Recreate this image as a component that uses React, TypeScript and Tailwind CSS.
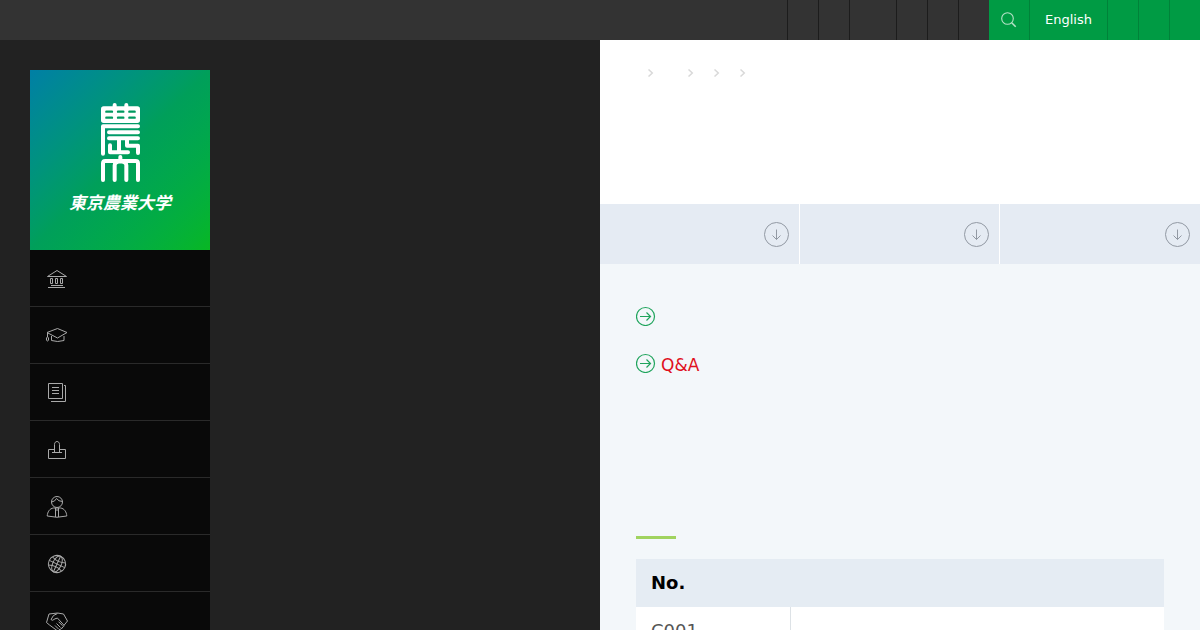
import React from "react";

type IconProps = { children: React.ReactNode };

function NavIcon({ children }: IconProps) {
  return (
    <svg
      viewBox="0 0 24 24"
      className="h-6 w-6 shrink-0"
      fill="none"
      stroke="#a9a9a9"
      strokeWidth="1"
      aria-hidden="true"
    >
      {children}
    </svg>
  );
}

const navItems: { label: string; href: string; icon: React.ReactNode }[] = [
  {
    label: "University",
    href: "#university",
    icon: (
      <>
        <path d="M12 4.5 2.5 10.5h19z" />
        <path d="M5.5 12.5h2v5h-2zM10.5 12.5h2v5h-2zM15.5 12.5h2v5h-2zM6 19.5h12M3 21.5h17" />
      </>
    ),
  },
  {
    label: "Faculties",
    href: "#faculties",
    icon: (
      <>
        <path d="M12.5 5.5 2 9.5l10.5 5.5 9.5-5.5z" />
        <path d="M6.5 13v4.5q6 2 12.5 0V13M2.5 9.5V14" />
        <ellipse cx="2.5" cy="16" rx="1.1" ry="2" />
      </>
    ),
  },
  {
    label: "Research",
    href: "#research",
    icon: (
      <>
        <path d="M3.5 3.5h14v15h-14zM7 7.5h7M7 10.5h7M7 13.5h7" />
        <path d="M19 5.5h1.5v16H6" />
      </>
    ),
  },
  {
    label: "Admissions",
    href: "#admissions",
    icon: (
      <>
        <path d="M9.5 12.5h-6v9h17v-9h-6" />
        <path d="M9.5 15.5v-8c0-4 5-4 5 0v8M7 15.5h10" />
      </>
    ),
  },
  {
    label: "Careers",
    href: "#careers",
    icon: (
      <>
        <circle cx="12" cy="8" r="5.5" />
        <path d="M6.5 8q3.5-.3 5-3.5 2 3 6 3" />
        <path d="M8.5 14c-4 .5-6 4-6.300 8q9.800 2.500 19.600 0c-.3-4-2.300-7.500-6.300-8z" />
        <path d="M10.5 14v9M13.500 14v9M11 16h2" />
      </>
    ),
  },
  {
    label: "International",
    href: "#international",
    icon: (
      <g transform="rotate(25 12 13)">
        <circle cx="12" cy="13" r="8.600" />
        <ellipse cx="12" cy="13" rx="4.300" ry="8.600" />
        <path d="M12 4.500v17M3.500 13h17M5 8.500q7 3 14 0M5 17.500q7-3 14 0" />
      </g>
    ),
  },
  {
    label: "Partnerships",
    href: "#partnerships",
    icon: (
      <g transform="translate(0 1)">
        <path d="M4 5 1.500 13.500l3 2.500L12 21.500q1.500.5 2-.8 1.700.2 2-1.200 1.700 0 1.700-1.500 1.500-.3 1.300-1.700L22.500 12l-4-7-6-1-8.500 1" />
        <path d="m12.500 4.500-4 2-2.500 4q1.200 2 4-.7l2.500-.7L19 16.300M11.500 14.500l4 4M13.500 12.700l4 4M10 16.500l3.500 3.500" />
      </g>
    ),
  },
];

function SealMark() {
  return (
    <svg viewBox="0 0 117 237" className="h-[79px] w-[39px]" aria-hidden="true">
      <g
        fill="none"
        stroke="#fff"
        strokeWidth="12"
        strokeLinecap="round"
        strokeLinejoin="round"
      >
        <path d="M41 6v14M76 6v14" />
        <rect x="6" y="16" width="105" height="38" rx="2" fill="#fff" />
        <path
          d="M16 26h17M51 26h16M85 26h16M16 44h17M51 44h16M85 44h16"
          stroke="#00995f"
          strokeWidth="7"
        />
        <path d="M6 152V70h105M24 88h87M24 106h87" />
        <path d="M27 127v21h27v-38M54 148h27M78 110v18h33v22" />
        <path d="M6 231v-50q0-7 7-7h91q7 0 7 7v50M58 162v12M41 231v-44q0-10 17-12 18 2 18 12v44" />
      </g>
    </svg>
  );
}

function CircleArrowDown() {
  return (
    <svg viewBox="0 0 26 26" className="h-[26px] w-[26px]" fill="none" stroke="#9299a3" aria-hidden="true">
      <circle cx="13.5" cy="13.5" r="12" />
      <path d="M13.5 8.5v10M9.5 14.5l4 4 4-4" />
    </svg>
  );
}

function CircleArrowRight() {
  return (
    <svg viewBox="0 0 20 20" className="h-5 w-5 shrink-0" fill="none" stroke="#1fa45c" strokeWidth="1.2" aria-hidden="true">
      <circle cx="9.5" cy="10.5" r="9" />
      <path d="M4 10.5h10.500M10.500 6.500l4 4-4 4" />
    </svg>
  );
}

function Chevron() {
  return (
    <svg viewBox="0 0 6 8" className="h-2 w-1.5" fill="none" stroke="#d9d9d9" strokeWidth="1.5" aria-hidden="true">
      <path d="m.5.5 3.800 3.500L.5 7.500" />
    </svg>
  );
}

function TopBar() {
  return (
    <header className="flex h-10 shrink-0 justify-end bg-[#333]">
      <nav className="flex" aria-label="Audience">
        {["a", "b"].map((k) => (
          <span key={k} className="w-[31px] border-l border-[#1c1c1c]" />
        ))}
        <span className="w-[47px] border-l border-[#1c1c1c]" />
        {["c", "d", "e"].map((k) => (
          <span key={k} className="w-[31px] border-l border-[#1c1c1c]" />
        ))}
      </nav>
      <div className="flex bg-[#009b44]">
        <button type="button" aria-label="Search" className="flex w-10 items-center justify-center">
          <svg viewBox="0 0 16 16" className="h-4 w-4" fill="none" stroke="#b5e2c7" strokeWidth="1.1">
            <circle cx="6.5" cy="6.5" r="5.800" />
            <path d="m10.700 10.700 4 4" strokeWidth="1.6" />
          </svg>
        </button>
        <a
          href="#english"
          className="flex items-center border-x border-[#008239] px-[15px] text-[13px] leading-5 text-white"
        >
          English
        </a>
        <span className="w-[31px] border-r border-[#008239]" />
        <span className="w-[31px] border-r border-[#008239]" />
        <span className="w-[30px]" />
      </div>
    </header>
  );
}

function Sidebar() {
  return (
    <aside className="w-[180px]">
      <a
        href="#home"
        className="flex h-[180px] flex-col items-center bg-linear-to-br from-[#007fa5] via-[#009f5a] to-[#08b722] pt-[33px]"
      >
        <SealMark />
        <span className="mt-2 text-[17px] leading-6 font-bold whitespace-nowrap text-white italic [font-family:'Noto_Sans_CJK_JP',sans-serif]">
          東京農業大学
        </span>
      </a>
      <ul>
        {navItems.map((item) => (
          <li key={item.href} className="border-b border-[#2a2a2a] bg-[#090909]">
            <a href={item.href} aria-label={item.label} className="flex h-14 items-center px-[15px]">
              <NavIcon>{item.icon}</NavIcon>
            </a>
          </li>
        ))}
      </ul>
    </aside>
  );
}

function Content() {
  return (
    <main className="bg-[#f3f7fa]">
      <div className="min-h-[164px] bg-white pt-[29px] pl-12">
        <div className="flex">
          <span className="w-10">
            <Chevron />
          </span>
          <span className="w-[26px]">
            <Chevron />
          </span>
          <span className="w-[26px]">
            <Chevron />
          </span>
          <Chevron />
        </div>
      </div>
      <nav className="grid grid-cols-3" aria-label="Sections">
        {["#overview", "#questions", "#list"].map((href) => (
          <a
            key={href}
            href={href}
            aria-label={href.slice(1)}
            className="flex h-[60px] items-center justify-end border-r border-white bg-[#e5ebf3] pr-[10px] last:border-r-0"
          >
            <CircleArrowDown />
          </a>
        ))}
      </nav>
      <section className="px-9 pt-10">
        <ul className="flex flex-col gap-[23px] text-[17px] leading-6">
          <li>
            <a href="#overview" aria-label="Overview" className="flex h-6 items-center">
              <CircleArrowRight />
            </a>
          </li>
          <li>
            <a href="#questions" className="flex h-6 items-start gap-[5px] text-[#e01020]">
              <span className="pt-0.5">
                <CircleArrowRight />
              </span>
              <span className="pt-0.5">Q&amp;A</span>
            </a>
          </li>
        </ul>
        <div className="mt-[161px] h-[3px] w-10 bg-[#a0d35f]" />
        <table className="mt-5 w-full table-fixed border-separate border-spacing-0 text-left text-lg leading-6">
          <thead>
            <tr className="bg-[#e5ecf3]">
              <th className="h-12 w-[155px] px-[15px] font-bold text-black">No.</th>
              <th />
            </tr>
          </thead>
          <tbody>
            <tr className="bg-white text-[#555]">
              <td className="h-12 border-r border-[#dde2e6] px-[15px]">C001</td>
              <td />
            </tr>
          </tbody>
        </table>
      </section>
    </main>
  );
}

export default function App() {
  return (
    <div className="flex h-screen flex-col overflow-hidden bg-[#222] font-['DejaVu_Sans',sans-serif]">
      <TopBar />
      <div className="grid min-h-0 flex-1 grid-cols-2">
        <div className="pt-[30px] pl-[30px]">
          <Sidebar />
        </div>
        <Content />
      </div>
    </div>
  );
}
